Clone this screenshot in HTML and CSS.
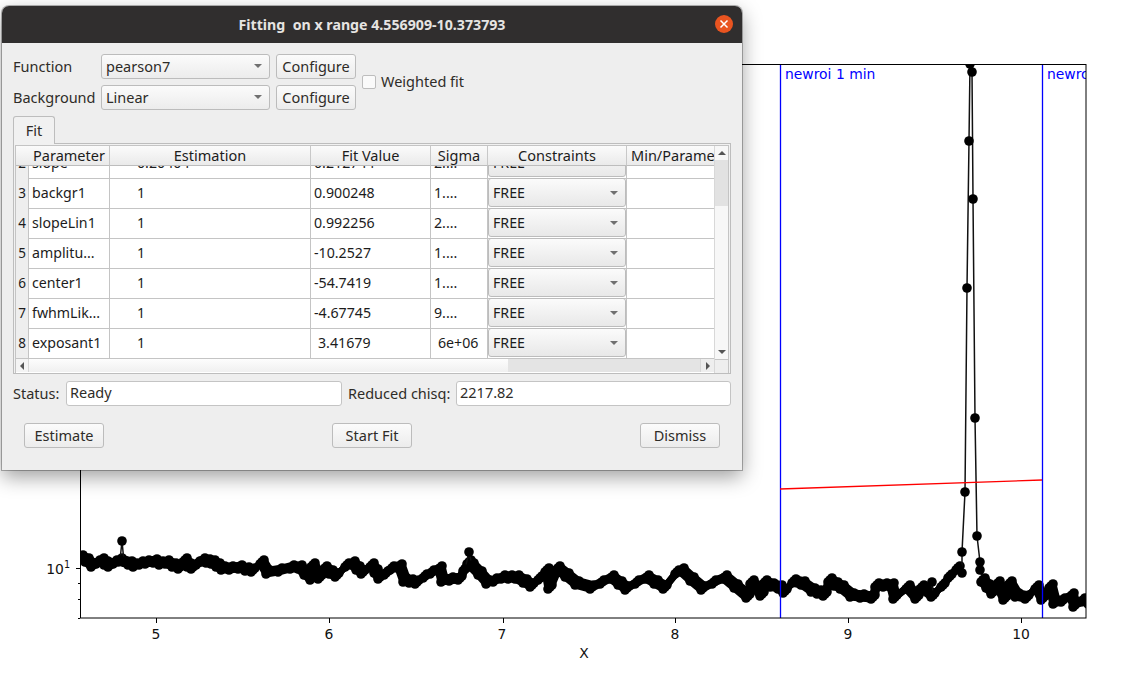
FILE: index.html
```html
<!DOCTYPE html>
<html lang="en">
<head>
<meta charset="utf-8">
<title>Fitting</title>
<link rel="stylesheet" href="styles.css">
</head>
<body>
<svg class="plot" viewBox="0 0 1136 682" width="1136" height="682">
  <defs>
    <clipPath id="axes"><rect x="80" y="64" width="1006" height="554"/></clipPath>
    <marker id="dot" viewBox="-5 -5 10 10" markerUnits="userSpaceOnUse" markerWidth="10" markerHeight="10"><circle r="4.8"/></marker>
  </defs>
  <g clip-path="url(#axes)">
    <g id="band">
      <polyline class="body" points="81,557 87,560 93,565 98,562 102,560 106,563 110,565 115,562 120,560 130,563 135,565 141,563 147,562 155,561 161,563 167,562 174,565 180,567 185,560 189,565 193,567 198,563 203,560 208,561 213,562 218,565 223,568 231,568 240,567 247,569 253,570 262,562 268,572 280,570 292,567 300,567 306,573 312,578 313,565 320,577 325,568 331,572 337,575 347,565 353,563 358,568 363,572 372,565 376,571 380,577 386,573 392,568 400,566 405,580 411,581 417,582 425,576 432,572 440,568 443,580 451,579 460,578 465,569 469,562 472,565 480,573 488,582 495,580 503,577 510,577 517,577 525,581 532,585 540,578 547,570 550,587 558,568 567,575 577,583 592,587 602,582 612,577 620,583 627,588 637,582 647,577 656,582 665,587 677,572 682,570 692,579 703,588 714,582 725,577 736,586 748,596 752,582 762,594 765,582 772,585 780,587 785,591 794,581 803,583 813,590 819,592 825,594 830,580 836,584 842,587 852,595 862,596 873,597 877,585 885,585 892,585 895,597 908,587 917,597 922,587 933,595 943,585 950,576 958,568"/>
      <polyline class="body" points="983,580 988,586 993,592 998,583 1005,598 1010,583 1017,595 1027,597 1037,587 1043,598 1051,586 1055,602 1063,600 1072,595 1075,605 1083,600 1090,602"/>
    </g>
    <use href="#band" transform="translate(2,-2)"/>
    <use href="#band" transform="translate(-2,2)"/>
    <polyline class="trace" points="120,560 122,541 124,562"/>
    <polyline class="trace" points="465,569 469,552 472,565"/>
    <polyline class="trace" points="932,582 933,595"/>
    <polyline class="trace" points="958,568 962,573 962,552 965,492 967,288 969,141 970,64 972,72 973,199 975,418 977,536 980,562 980,570 983,580"/>
    <line class="roi" x1="780.5" y1="64" x2="780.5" y2="618"/>
    <line class="roi" x1="1042.5" y1="64" x2="1042.5" y2="618"/>
    <line class="fit" x1="780" y1="489" x2="1042" y2="480"/>
    <text class="roi-label" x="785" y="79">newroi 1 min</text>
    <text class="roi-label" x="1047" y="79">newroi 1 max</text>
  </g>
  <rect class="frame" x="80.5" y="64.5" width="1005.5" height="553.5"/>
  <path class="tick" d="M156.500 618v5M329.500 618v5M503.500 618v5M675.500 618v5M848.500 618v5M1021.500 618v5M76 568.500h4M78 583.500h2M78 599.500h2M78 618.500h2"/>
  <g class="tick-label">
    <text x="156" y="639">5</text>
    <text x="329" y="639">6</text>
    <text x="502" y="639">7</text>
    <text x="675" y="639">8</text>
    <text x="848" y="639">9</text>
    <text x="1021" y="639">10</text>
    <text x="584" y="658">X</text>
    <text x="55" y="574">10</text>
    <text class="sup" x="67" y="568">1</text>
  </g>
</svg>

<div class="dialog">
  <header class="titlebar">
    <span class="title">Fitting  on x range 4.556909-10.373793</span>
    <span class="close"><svg viewBox="0 0 18 18" width="18" height="18"><path d="M5.500 5.500l7 7M12.500 5.500l-7 7"/></svg></span>
  </header>
  <div class="content">
    <div class="controls">
      <label class="lbl">Function</label>
      <div class="combo">pearson7<i class="arrow"></i></div>
      <button class="btn">Configure</button>
      <label class="lbl">Background</label>
      <div class="combo">Linear<i class="arrow"></i></div>
      <button class="btn">Configure</button>
      <div class="weighted"><span class="check"></span><span class="lbl">Weighted fit</span></div>
    </div>

    <div class="tab">Fit</div>
    <div class="panel">
      <div class="table-frame">
        <div class="table-main">
          <div class="row head">
            <div class="hc hc-corner"></div>
            <div class="hc">Parameter</div>
            <div class="hc">Estimation</div>
            <div class="hc">Fit Value</div>
            <div class="hc">Sigma</div>
            <div class="hc">Constraints</div>
            <div class="hc hc-clip">Min/Parameter1</div>
          </div>
          <div class="rows">
            <div class="row"><div class="rh">2</div><div class="c">slope</div><div class="c est">0.20404</div><div class="c">0.212744</div><div class="c">2....</div><div class="cc"><div class="free">FREE<i class="arrow"></i></div></div><div class="c"></div></div>
            <div class="row"><div class="rh">3</div><div class="c">backgr1</div><div class="c est">1</div><div class="c">0.900248</div><div class="c">1....</div><div class="cc"><div class="free">FREE<i class="arrow"></i></div></div><div class="c"></div></div>
            <div class="row"><div class="rh">4</div><div class="c">slopeLin1</div><div class="c est">1</div><div class="c">0.992256</div><div class="c">2....</div><div class="cc"><div class="free">FREE<i class="arrow"></i></div></div><div class="c"></div></div>
            <div class="row"><div class="rh">5</div><div class="c">amplitu...</div><div class="c est">1</div><div class="c">-10.2527</div><div class="c">1....</div><div class="cc"><div class="free">FREE<i class="arrow"></i></div></div><div class="c"></div></div>
            <div class="row"><div class="rh">6</div><div class="c">center1</div><div class="c est">1</div><div class="c">-54.7419</div><div class="c">1....</div><div class="cc"><div class="free">FREE<i class="arrow"></i></div></div><div class="c"></div></div>
            <div class="row"><div class="rh">7</div><div class="c">fwhmLik...</div><div class="c est">1</div><div class="c">-4.67745</div><div class="c">9....</div><div class="cc"><div class="free">FREE<i class="arrow"></i></div></div><div class="c"></div></div>
            <div class="row"><div class="rh">8</div><div class="c">exposant1</div><div class="c est">1</div><div class="c ind">3.41679</div><div class="c ind">6e+06</div><div class="cc"><div class="free">FREE<i class="arrow"></i></div></div><div class="c"></div></div>
          </div>
          <div class="hscroll">
            <span class="sb-btn"><i class="tri-left"></i></span>
            <span class="h-thumb"></span>
            <span class="h-trough"></span>
            <span class="sb-btn sb-end"><i class="tri-right"></i></span>
          </div>
        </div>
        <div class="vscroll">
          <span class="v-btn"><i class="tri-up"></i></span>
          <span class="v-thumb"></span>
          <span class="v-trough"></span>
          <span class="v-btn"><i class="tri-down"></i></span>
          <span class="corner"></span>
        </div>
      </div>
    </div>

    <div class="status">
      <span class="lbl">Status:</span>
      <div class="field">Ready</div>
      <span class="lbl">Reduced chisq:</span>
      <div class="field">2217.82</div>
    </div>

    <div class="actions">
      <button class="btn">Estimate</button>
      <button class="btn">Start Fit</button>
      <button class="btn">Dismiss</button>
    </div>
  </div>
</div>
</body>
</html>
```

FILE: styles.css
```css
* { box-sizing: border-box; }
html, body { margin: 0; height: 100%; }
body {
  position: relative;
  width: 1136px;
  height: 682px;
  overflow: hidden;
  background: #fff;
  font-family: "Noto Sans", "Open Sans", sans-serif;
  font-size: 14.500px;
  color: #2e2c28;
}

/* plot */
.plot { display: block; }
.plot .body { fill: none; stroke: #000; stroke-width: 7; stroke-linejoin: round; stroke-linecap: round; marker-start: url(#dot); marker-mid: url(#dot); marker-end: url(#dot); }
.plot .trace { fill: none; stroke: #111; stroke-width: 1.5; stroke-linejoin: round; marker-start: url(#dot); marker-mid: url(#dot); marker-end: url(#dot); }
.plot .roi { stroke: #00f; stroke-width: 1.3; }
.plot .fit { stroke: #f00; stroke-width: 1.3; }
.plot .roi-label { fill: #00f; font-family: "DejaVu Sans", sans-serif; font-size: 13.900px; }
.plot .frame { fill: none; stroke: #000; stroke-width: 1; }
.plot .tick { fill: none; stroke: #000; stroke-width: 1; }
.tick-label text { font-family: "DejaVu Sans", sans-serif; font-size: 13.900px; fill: #111; text-anchor: middle; }
.tick-label .sup { font-size: 9.700px; }

/* window */
.dialog {
  position: absolute;
  left: 2px;
  top: 6px;
  width: 740px;
  height: 464px;
  background: #eeeeee;
  border-radius: 7px 7px 0 0;
  box-shadow: 0 0 0 1px rgba(0, 0, 0, .28), 0 7px 20px rgba(0, 0, 0, .38);
  display: flex;
  flex-direction: column;
}
.titlebar {
  height: 37px;
  flex: none;
  background: #302e2e;
  border-radius: 7px 7px 0 0;
  display: flex;
  align-items: center;
  justify-content: center;
  position: relative;
}
.title {
  font-weight: 700;
  font-size: 14.200px;
  color: #e6e4e2;
  white-space: pre;
}
.close {
  position: absolute;
  right: 9px;
  top: 9px;
  width: 18px;
  height: 18px;
  border-radius: 50%;
  background: #e95420;
}
.close svg { display: block; }
.close path { stroke: #fff; stroke-width: 1.500; fill: none; }

.content { padding: 11px 11px 0; }

.controls {
  display: grid;
  grid-template-columns: 82px 169px 80px auto;
  grid-template-rows: 25px 25px;
  column-gap: 6px;
  row-gap: 6px;
  justify-content: start;
  align-items: stretch;
}
.controls .lbl { align-self: center; white-space: nowrap; padding-bottom: 2px; }
.controls .weighted { grid-column: 4; grid-row: 1 / 3; align-self: center; display: flex; align-items: center; gap: 5px; }
.check {
  width: 14px;
  height: 14px;
  background: #fafafa;
  border: 1px solid #bdbdbd;
  border-radius: 2px;
}

.combo {
  display: flex;
  align-items: center;
  justify-content: space-between;
  padding: 0 7px 2px 4px;
  border: 1px solid #bcbcbc;
  border-radius: 3px;
  background: linear-gradient(#fbfbfb, #ececec);
}
.arrow {
  width: 0;
  height: 0;
  border-left: 4px solid transparent;
  border-right: 4px solid transparent;
  border-top: 4px solid #707070;
}
.btn {
  font: inherit;
  color: inherit;
  padding: 0 0 2px;
  width: 80px;
  height: 25px;
  border: 1px solid #bcbcbc;
  border-radius: 3px;
  background: linear-gradient(#fbfbfb, #ececec);
}

.tab {
  width: 42px;
  height: 28px;
  margin-top: 6px;
  margin-bottom: -1px;
  padding-bottom: 2px;
  position: relative;
  z-index: 1;
  background: #f1f1f1;
  border: 1px solid #bdbdbd;
  border-bottom: 0;
  border-radius: 3px 3px 0 0;
  display: flex;
  align-items: center;
  justify-content: center;
}
.panel {
  height: 231px;
  border: 1px solid #bdbdbd;
  padding: 1px 1px 0;
  background: #f1f1f1;
}
.table-frame {
  height: 228px;
  border: 1px solid #c4c4c4;
  border-bottom: 0;
  display: flex;
  background: #fff;
  color: #1c1c1c;
}
.table-main { width: 698px; flex: none; display: flex; flex-direction: column; }
.row {
  display: grid;
  grid-template-columns: 13px 81px 201px 120px 57px 139px 87px;
  height: 30px;
  flex: none;
}
.head { height: 20px; position: relative; z-index: 1; }
.hc {
  background: linear-gradient(#fbfbfb, #eaeaea);
  border-right: 1px solid #c8c8c8;
  border-bottom: 1px solid #bdbdbd;
  text-align: center;
  line-height: 18px;
  white-space: nowrap;
  overflow: hidden;
}
.hc-corner { border-right: 0; }
.hc-clip { border-right: 0; text-align: left; padding-left: 4px; }
.rows {
  height: 192px;
  overflow: hidden;
  display: flex;
  flex-direction: column;
  justify-content: flex-end;
}
.rh {
  background: #eeeeee;
  border-right: 1px solid #c4c4c4;
  border-bottom: 1px solid #c4c4c4;
  text-align: center;
  line-height: 30px;
  font-size: 13.500px;
}
.c {
  border-right: 1px solid #c4c4c4;
  border-bottom: 1px solid #c4c4c4;
  padding-left: 3px;
  line-height: 29px;
  font-size: 14.200px;
  white-space: nowrap;
  overflow: hidden;
}
.row .c:last-child { border-right: 0; }
.est { padding-left: 27px; }
.ind { padding-left: 7px; }
.cc { border-bottom: 1px solid #c4c4c4; border-right: 1px solid #c4c4c4; }
.free {
  height: 29px;
  display: flex;
  align-items: center;
  justify-content: space-between;
  padding: 0 7px 0 4px;
  border: 1px solid #bcbcbc;
  border-radius: 3px;
  font-size: 14.200px;
  background: linear-gradient(#fbfbfb, #e8e8e8);
}
.hscroll {
  height: 14px;
  flex: none;
  display: flex;
  background: #e4e4e4;
  border-top: 1px solid #c4c4c4;
}
.sb-btn { width: 13px; flex: none; display: flex; align-items: center; justify-content: center; background: #f4f4f4; border-right: 1px solid #d8d8d8; }
.sb-end { background: #eeeeee; border-left: 1px solid #d8d8d8; border-right: 0; width: 14px; }
.h-thumb { width: 479px; flex: none; background: linear-gradient(#fdfdfd, #f0f0f0); }
.h-trough { flex: 1; background: #e4e4e4; }
.vscroll {
  width: 14px;
  flex: none;
  display: flex;
  flex-direction: column;
  background: #f7f7f7;
  border-left: 1px solid #d8d8d8;
}
.v-btn { height: 14px; flex: none; display: flex; align-items: center; justify-content: center; }
.v-thumb { height: 46px; flex: none; background: #e2e2e2; }
.v-trough { flex: 1; }
.corner { height: 14px; flex: none; background: #eeeeee; border-top: 1px solid #c4c4c4; }
.tri-up, .tri-down, .tri-left, .tri-right { width: 0; height: 0; display: block; }
.tri-up { border-left: 4px solid transparent; border-right: 4px solid transparent; border-bottom: 4px solid #555; }
.tri-down { border-left: 4px solid transparent; border-right: 4px solid transparent; border-top: 4px solid #555; }
.tri-left { border-top: 4px solid transparent; border-bottom: 4px solid transparent; border-right: 4px solid #555; }
.tri-right { border-top: 4px solid transparent; border-bottom: 4px solid transparent; border-left: 4px solid #555; }

.status {
  display: grid;
  grid-template-columns: 47px 276px 102px 275px;
  column-gap: 6px;
  height: 25px;
  margin-top: 7px;
  align-items: center;
}
.status .lbl { white-space: nowrap; padding-bottom: 2px; }
.field {
  height: 25px;
  background: #fff;
  border: 1px solid #c4c4c4;
  border-radius: 3px;
  padding-left: 3px;
  line-height: 21px;
}
.actions {
  display: flex;
  justify-content: space-between;
  margin-top: 17px;
  padding: 0 11px;
}
```
